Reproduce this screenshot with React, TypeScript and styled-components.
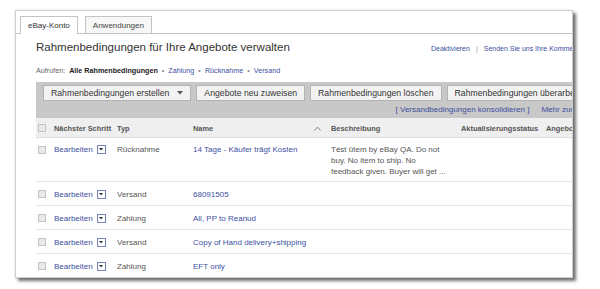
import styled, { createGlobalStyle } from 'styled-components';

const GlobalStyle = createGlobalStyle`
  html, body {
    margin: 0;
    padding: 0;
    background: #ffffff;
    font-family: "Liberation Sans", Arial, sans-serif;
    overflow: hidden;
  }
`;

const Page = styled.div`
  width: 600px;
  height: 289px;
  padding: 10px 0 0 15px;
  box-sizing: border-box;
`;

const Card = styled.div`
  width: 558px;
  height: 268px;
  box-sizing: border-box;
  border: 1px solid #cfcfcf;
  background: #fff;
  overflow: hidden;
  box-shadow: 3px 3px 3px rgba(0, 0, 0, 0.55), 0 0 2px rgba(0, 0, 0, 0.15);
`;

const Inner = styled.div`
  width: 720px;
`;

const TabBar = styled.div`
  display: flex;
  gap: 7px;
  padding: 5px 0 0 4px;
  border-bottom: 1px solid #c4c4c4;
`;

const Tab = styled.div<{ $active?: boolean }>`
  padding: 0 7px;
  display: flex;
  align-items: center;
  font-size: 8px;
  color: ${p => (p.$active ? '#333' : '#444')};
  background: ${p => (p.$active ? '#fff' : '#f7f7f7')};
  border: 1px solid #c4c4c4;
  border-bottom: none;
  margin-bottom: ${p => (p.$active ? '-1px' : '0')};
  box-sizing: border-box;
  height: ${p => (p.$active ? '18px' : '17px')};
`;

const Main = styled.div`
  padding-left: 20px;
`;

const TitleRow = styled.div`
  display: flex;
  align-items: center;
  margin-top: 6px;
  height: 14px;
`;

const Title = styled.h1`
  margin: 0;
  width: 395px;
  font-size: 11.5px;
  font-weight: normal;
  color: #333;
  white-space: nowrap;
`;

const SmallLinks = styled.div`
  font-size: 7px;
  color: #999;
  display: flex;
  gap: 6px;
  white-space: nowrap;
  margin-top: 2px;
`;

const A = styled.span`
  color: #3d4f9f;
`;

const Breadcrumb = styled.div`
  margin-top: 11px;
  height: 10px;
  display: flex;
  align-items: center;
  gap: 4px;
  font-size: 7.2px;
  color: #666;
  white-space: nowrap;
`;

const Strong = styled.b`
  color: #222;
`;

const Dot = styled.span`
  color: #888;
`;

const Toolbar = styled.div`
  margin-top: 7px;
  background: #c8c8c8;
  padding: 3px 0 3px 7px;
  width: 568px;
  box-sizing: border-box;
`;

const ButtonRow = styled.div`
  display: flex;
  gap: 5px;
`;

const Button = styled.div`
  height: 16px;
  box-sizing: border-box;
  border: 1px solid #b3b3b3;
  background: #f3f3f3;
  padding: 0 7px;
  display: flex;
  align-items: center;
  gap: 8px;
  font-size: 8.7px;
  color: #333;
  white-space: nowrap;
`;

const ToolLinks = styled.div`
  margin-top: 4px;
  height: 10px;
  display: flex;
  justify-content: flex-end;
  gap: 12px;
  font-size: 8px;
  white-space: nowrap;
`;

const Grid = styled.div<{ $h: number; $head?: boolean }>`
  display: grid;
  grid-template-columns: 18px 63px 76px 138px 130px 85px 80px;
  height: ${p => p.$h}px;
  box-sizing: border-box;
  align-items: ${p => (p.$h > 30 ? 'start' : 'center')};
  padding-top: ${p => (p.$h > 30 ? '7px' : '1px')};
  background: ${p => (p.$head ? '#efefef' : '#fff')};
  border-bottom: 1px solid ${p => (p.$head ? '#dedede' : '#e6e6e6')};
  font-size: 8px;
  color: #555;
  white-space: nowrap;
`;

const HeadCell = styled.div`
  font-weight: bold;
  font-size: 7.4px;
  color: #555;
  display: flex;
  justify-content: space-between;
  align-items: center;
  padding-right: 10px;
`;

const Cell = styled.div`
  display: flex;
  align-items: center;
  gap: 4px;
`;

const Desc = styled.div`
  line-height: 11px;
  margin-top: -1px;
`;

const Check = styled.span`
  width: 8px;
  height: 8px;
  margin-left: 2px;
  box-sizing: border-box;
  border: 1px solid #c2c2c2;
  background: #e9e9e9;
  display: block;
`;

const DropBox = styled.span`
  width: 9px;
  height: 9px;
  box-sizing: border-box;
  border: 1px solid #7884b8;
  background: #fcfcfc;
  display: flex;
  align-items: center;
  justify-content: center;
`;

const Caret = ({ size = 5, color = '#333' }: { size?: number; color?: string }) => (
  <svg width={size} height={size * 0.6} viewBox="0 0 10 6">
    <polygon points="0,0 10,0 5,6" fill={color} />
  </svg>
);

const SortUp = () => (
  <svg width="7" height="5" viewBox="0 0 7 5">
    <polyline points="0.5,4.5 3.5,1 6.5,4.5" fill="none" stroke="#888" strokeWidth="1" />
  </svg>
);

const rows = [
  { type: 'Versand', name: '68091505' },
  { type: 'Zahlung', name: 'All, PP to Reanud' },
  { type: 'Versand', name: 'Copy of Hand delivery+shipping' },
  { type: 'Zahlung', name: 'EFT only' },
];

const EditCell = () => (
  <Cell>
    <A>Bearbeiten</A>
    <DropBox>
      <Caret size={4} color="#2a2a2a" />
    </DropBox>
  </Cell>
);

export default function App() {
  return (
    <>
      <GlobalStyle />
      <Page>
        <Card>
          <Inner>
            <TabBar>
              <Tab $active>eBay-Konto</Tab>
              <Tab>Anwendungen</Tab>
            </TabBar>
            <Main>
              <TitleRow>
                <Title>Rahmenbedingungen für Ihre Angebote verwalten</Title>
                <SmallLinks>
                  <A>Deaktivieren</A>
                  <span>|</span>
                  <A>Senden Sie uns Ihre Kommentare</A>
                </SmallLinks>
              </TitleRow>
              <Breadcrumb>
                <span>Aufrufen:</span>
                <Strong>Alle Rahmenbedingungen</Strong>
                <Dot>•</Dot>
                <A>Zahlung</A>
                <Dot>•</Dot>
                <A>Rücknahme</A>
                <Dot>•</Dot>
                <A>Versand</A>
              </Breadcrumb>
              <Toolbar>
                <ButtonRow>
                  <Button>
                    Rahmenbedingungen erstellen
                    <Caret size={6} color="#555" />
                  </Button>
                  <Button>Angebote neu zuweisen</Button>
                  <Button>Rahmenbedingungen löschen</Button>
                  <Button>Rahmenbedingungen überarbeiten</Button>
                </ButtonRow>
                <ToolLinks>
                  <A>[ Versandbedingungen konsolidieren ]</A>
                  <A>Mehr zum Thema</A>
                </ToolLinks>
              </Toolbar>
              <Grid $h={20} $head>
                <Check />
                <HeadCell>Nächster Schritt</HeadCell>
                <HeadCell>Typ</HeadCell>
                <HeadCell>
                  Name
                  <SortUp />
                </HeadCell>
                <HeadCell>Beschreibung</HeadCell>
                <HeadCell>Aktualisierungsstatus</HeadCell>
                <HeadCell>Angebote</HeadCell>
              </Grid>
              <Grid $h={44}>
                <Check style={{ marginTop: 1 }} />
                <EditCell />
                <Cell>Rücknahme</Cell>
                <Cell>
                  <A>14 Tage - Käufer trägt Kosten</A>
                </Cell>
                <Desc>
                  Tést ütem by eBay QA. Do not
                  <br />
                  buy. No item to ship. No
                  <br />
                  feedback given. Buyer will get ...
                </Desc>
                <div />
                <div />
              </Grid>
              {rows.map((r, i) => (
                <Grid $h={24} key={i}>
                  <Check />
                  <EditCell />
                  <Cell>{r.type}</Cell>
                  <Cell>
                    <A>{r.name}</A>
                  </Cell>
                  <div />
                  <div />
                  <div />
                </Grid>
              ))}
            </Main>
          </Inner>
        </Card>
      </Page>
    </>
  );
}
